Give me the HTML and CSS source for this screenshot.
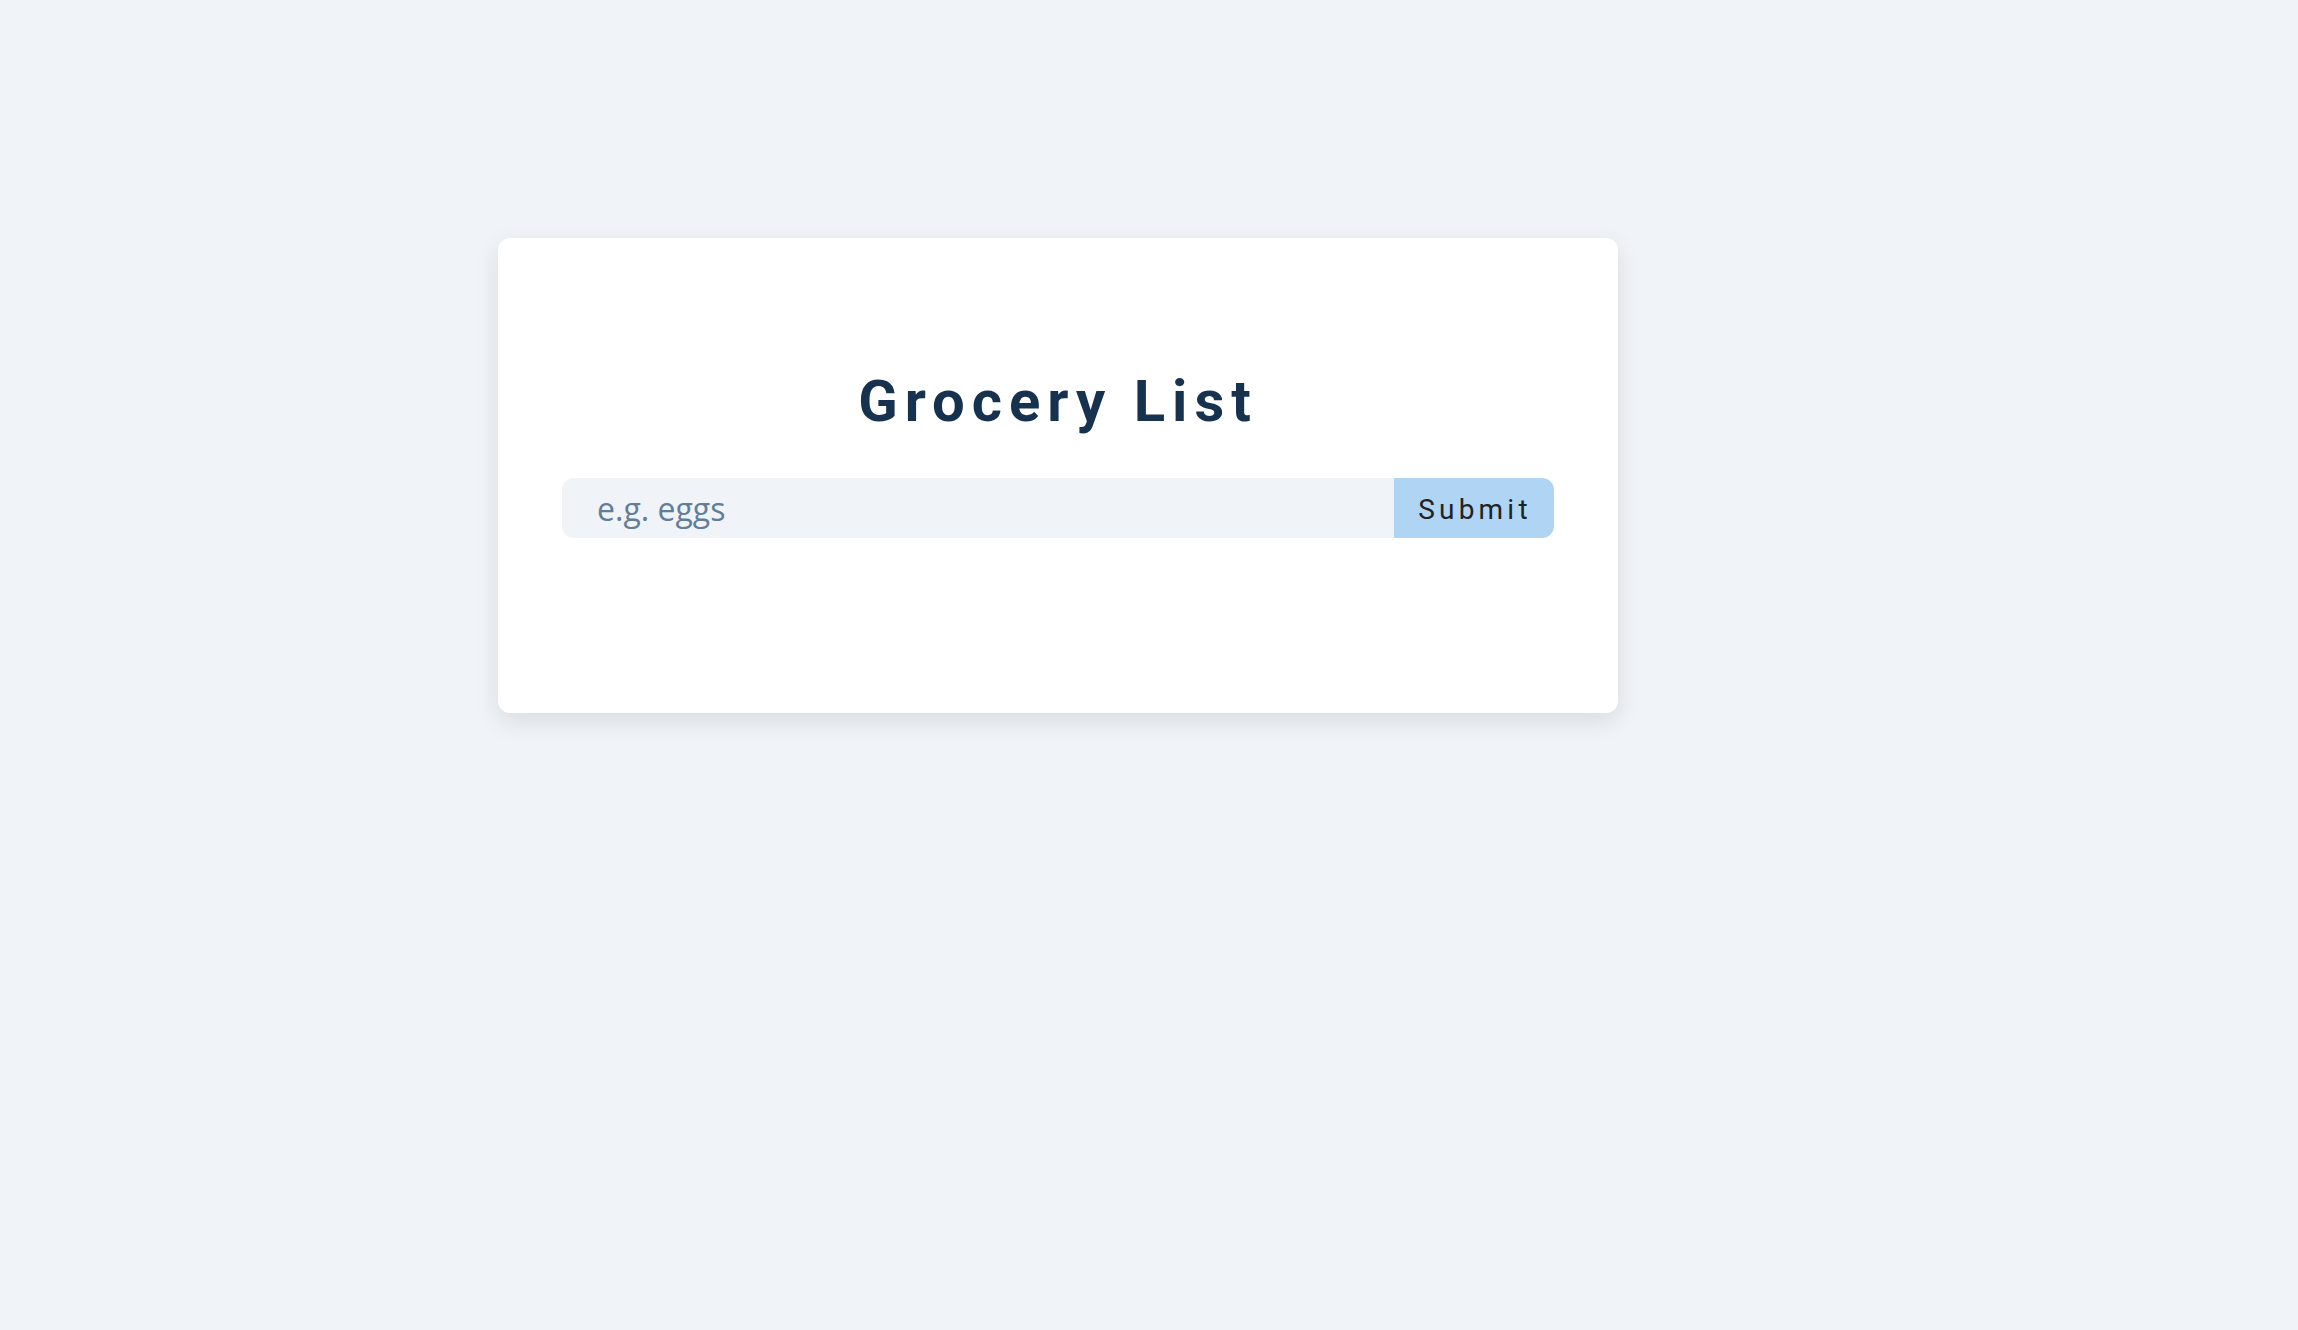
FILE: index.html
```html
<!DOCTYPE html>
<html lang="en">
<head>
<meta charset="utf-8">
<title>Grocery List</title>
<link rel="stylesheet" href="styles.css">
</head>
<body>
<section class="card">
  <h3 class="title">Grocery List</h3>
  <form class="grocery-form">
    <input type="text" class="grocery-input" placeholder="e.g. eggs">
    <button type="submit" class="submit-btn">Submit</button>
  </form>
</section>
</body>
</html>
```

FILE: styles.css
```css
html, body {
  margin: 0;
  padding: 0;
}
body {
  background: #f0f4f8;
  font-family: "Open Sans", "Liberation Sans", sans-serif;
  min-height: 1330px;
}
.card {
  box-sizing: border-box;
  width: 1120px;
  margin: 238px 0 0 498px;
  padding: 134px 64px 175px;
  background: #ffffff;
  border-radius: 12px;
  box-shadow: 0 8px 24px rgba(0, 0, 0, 0.1);
}
.title {
  margin: 0 0 48px;
  text-align: center;
  font-family: Roboto, "Liberation Sans", sans-serif;
  font-weight: 700;
  font-size: 58px;
  line-height: 1;
  letter-spacing: 7px;
  color: #16324f;
}
.grocery-form {
  display: flex;
  height: 60px;
}
.grocery-input {
  flex: 1;
  min-width: 0;
  box-sizing: border-box;
  height: 60px;
  margin: 0;
  padding: 0 0 0 35px;
  border: none;
  outline: none;
  background: #f0f4f8;
  border-top-left-radius: 12px;
  border-bottom-left-radius: 12px;
  font-family: "Open Sans", sans-serif;
  font-size: 32px;
  color: #102a43;
}
.grocery-input::placeholder {
  color: #627d98;
  opacity: 1;
}
.submit-btn {
  width: 160px;
  height: 60px;
  margin: 0;
  padding: 2px 0 0 2px;
  border: none;
  background: #b0d4f4;
  border-top-right-radius: 12px;
  border-bottom-right-radius: 12px;
  font-family: Roboto, "Liberation Sans", sans-serif;
  font-size: 28px;
  letter-spacing: 4.2px;
  color: #222222;
  cursor: pointer;
}
```
